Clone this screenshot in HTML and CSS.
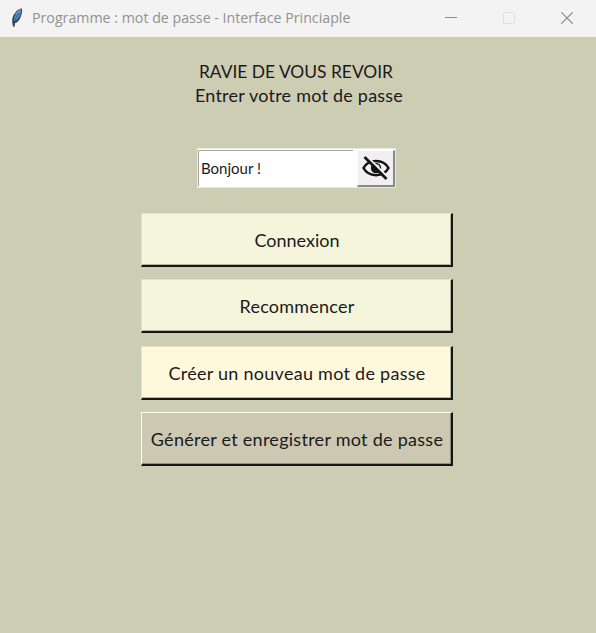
FILE: index.html
```html
<!DOCTYPE html>
<html lang="fr">
<head>
<meta charset="utf-8">
<title>Programme : mot de passe</title>
<link rel="stylesheet" href="styles.css">
</head>
<body>
<header class="titlebar">
  <svg class="feather" width="12" height="20" viewBox="0 0 12 20">
    <path d="M2 18.500C1 14 .5 9 4 5C6 2 8.500 .5 11 .5C11.500 4 10.500 8 8.500 11.500C6.500 14.500 4.500 15 4 15L3.500 19Z" fill="#3c4048"/>
    <path d="M3 13C2.500 8 6 3 10 2C10.500 6 7.500 11 4.500 13Z" fill="#4f8cd2"/>
    <path d="M3 17L5 10L8 5" fill="none" stroke="#294b7d" stroke-width=".8"/>
    <path d="M4.500 6L7.500 3L10 1.500" fill="none" stroke="#a9b6c5" stroke-width=".8"/>
  </svg>
  <span class="title">Programme : mot de passe - Interface Princiaple</span>
  <div class="controls">
    <svg width="12" height="12" viewBox="0 0 12 12"><path d="M0 5.500H12" stroke="#8c8c8c"/></svg>
    <svg width="12" height="12" viewBox="0 0 12 12"><rect x=".5" y=".5" width="11" height="11" rx="1" fill="none" stroke="#dedede"/></svg>
    <svg width="12" height="12" viewBox="0 0 12 12"><path d="M.3.3L11.700 11.700M11.700.3L.3 11.700" stroke="#858585" stroke-width="1.100"/></svg>
  </div>
</header>
<main class="content">
  <h1 class="heading"><span class="greeting">RAVIE DE VOUS REVOIR</span><span class="prompt">Entrer votre mot de passe</span></h1>
  <div class="entry">
    <div class="field"><span>Bonjour !</span></div>
    <button class="eye" aria-label="Afficher">
      <svg width="28" height="28" viewBox="0 0 28 28" fill="none" stroke="#141414">
        <path d="M1.500 14C6.500 4.500 21.500 4.500 26.500 14C21.500 23.500 6.500 23.500 1.500 14Z" stroke-width="2.500"/>
        <circle cx="14" cy="14" r="5.200" fill="#141414" stroke="none"/>
        <path d="M14 10.800Q17 11 17.200 14" stroke="#f0f0f0" stroke-width="1.200"/>
        <path d="M4.700 2.200L27 24.500" stroke="#f0f0f0" stroke-width="2.200"/>
        <path d="M2.500 3L24.500 25" stroke-width="2.600"/>
      </svg>
    </button>
  </div>
  <div class="actions">
    <button class="action beige"><span>Connexion</span></button>
    <button class="action beige"><span class="medium">Recommencer</span></button>
    <button class="action cream"><span class="wide">Créer un nouveau mot de passe</span></button>
    <button class="action taupe"><span class="wide">Générer et enregistrer mot de passe</span></button>
  </div>
</main>
</body>
</html>
```
FILE: styles.css
```css
* { box-sizing: border-box; }
body { margin: 0; height: 633px; overflow: hidden; background: #cdcdb4; color: #1a1a1a; font-family: Lato, "Liberation Sans", sans-serif; }
button { font: inherit; color: inherit; padding: 0; border-radius: 0; }
span { white-space: nowrap; }
.titlebar { height: 37px; display: flex; align-items: center; padding: 0 23px 2px 11px; background: #f3f3f3; }
.feather { margin-right: 9px; flex: none; }
.title { width: 330px; padding-bottom: 1px; font-family: "Open Sans", "Noto Sans", sans-serif; font-size: 15px; color: #929292; transform: scaleX(.947); transform-origin: left; }
.controls { margin-left: auto; display: flex; gap: 46px; padding-top: 1px; }
.content { display: flex; flex-direction: column; align-items: center; }
.heading { margin: 23px 0 0 2px; font-size: 18px; line-height: 24px; font-weight: 400; display: flex; flex-direction: column; align-items: center; height: 48px; }
.greeting { margin-right: 6px; font-size: 17.4px; }
.prompt { letter-spacing: .22px; margin-top: -1px; }
.entry { margin-top: 40px; margin-left: -3px; width: 199px; height: 40px; display: flex; background: #fff; border: 1px solid #e9e9e0; padding: 1px 0 0; }
.field { width: 155px; height: 36px; border-top: 1px solid #a5a5a5; border-left: 1px solid #a5a5a5; padding: 0 0 2px 2px; display: flex; align-items: center; font-size: 15px; }
.eye { width: 38px; height: 37px; margin-left: 4px; display: flex; align-items: center; justify-content: center; background: #f0f0f0; border: 1px solid #fff; border-right: 2px solid #888; border-bottom: 2px solid #888; }
.actions { margin: 25px 0 0 -2px; display: flex; flex-direction: column; gap: 12.3px; }
.action { width: 312px; height: 54px; font-size: 18px; padding: 1px 0 0 1px; display: flex; align-items: center; justify-content: center; border: 1px solid #e2e2c9; border-right: 2px solid #151515; border-bottom: 2px solid #151515; box-shadow: inset -1px -1px #b5b59f; }
.medium { letter-spacing: .22px; }
.wide { letter-spacing: .27px; }
.beige { background: #f5f5dc; }
.cream { background: #fff8dc; }
.taupe { background: #cdc8b1; border-top-color: #fffff0; border-left-color: #fffff0; box-shadow: inset -1px -1px #8e8b7b; }
```
